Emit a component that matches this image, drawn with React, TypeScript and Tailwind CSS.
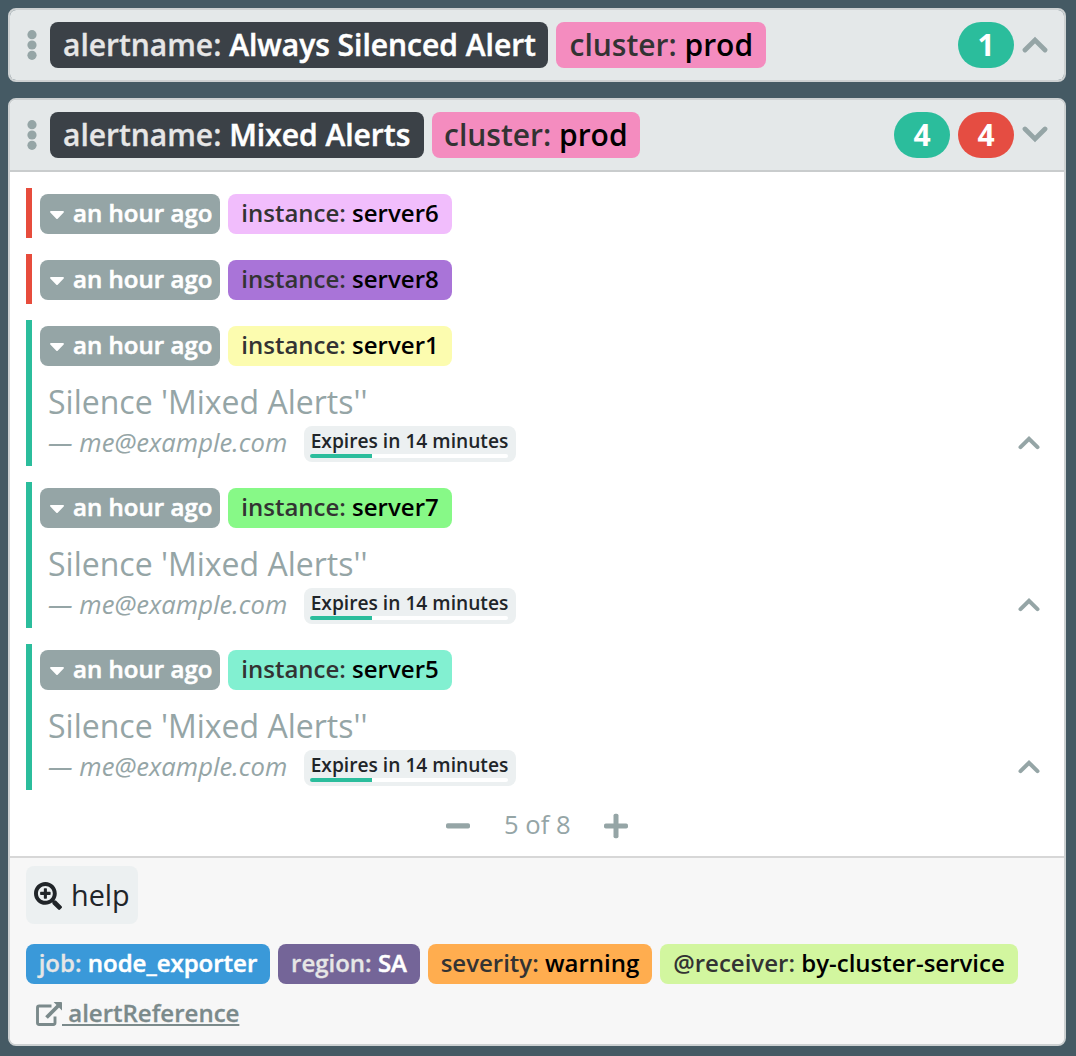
import type { ReactNode } from "react";
import { FaCaretDown, FaSearchPlus } from "react-icons/fa";

type LabelProps = { name: string; value: string; className: string; light?: boolean };

function LabelText({ name, value, light }: { name: string; value: string; light?: boolean }) {
  return (
    <>
      <span className={light ? "text-[#e6e6e6] [-webkit-text-stroke:0.3px_#e6e6e6]" : "text-[#333333]"}>{name}: </span>
      <span className={light ? "text-white [-webkit-text-stroke:0.5px_white]" : "text-black"}>{value}</span>
    </>
  );
}

function HeaderLabel({ className, ...text }: LabelProps) {
  return (
    <span
      className={`flex h-[46px] items-center rounded-lg text-[30px] leading-none font-semibold tracking-[-0.01px] whitespace-pre ${className}`}
    >
      <LabelText {...text} />
    </span>
  );
}

function Label({ className, ...text }: LabelProps) {
  return (
    <span
      className={`flex h-10 items-center justify-center rounded-lg pb-0.5 text-[24px] leading-none font-semibold whitespace-pre ${className}`}
    >
      <LabelText {...text} />
    </span>
  );
}

function Dots() {
  return (
    <svg width="10" height="30" viewBox="0 0 10 30" className="mr-[13px] ml-[17px] fill-[#95a5a6]">
      <circle cx="5" cy="4.7" r="4.6" />
      <circle cx="5" cy="15" r="4.6" />
      <circle cx="5" cy="25.3" r="4.6" />
    </svg>
  );
}

function Chevron({ down, className }: { down?: boolean; className: string }) {
  return (
    <svg
      viewBox="0 0 26 17"
      className={`shrink-0 ${className}`}
      fill="none"
      stroke="currentColor"
      strokeWidth="4.8"
      strokeLinecap="round"
      strokeLinejoin="miter"
    >
      {down ? <path d="M3 3 L13 12.9 L23 3" /> : <path d="M3 14 L13 4.1 L23 14" />}
    </svg>
  );
}

function Minus() {
  return (
    <svg width="24" height="26" viewBox="0 0 24 26" fill="currentColor">
      <rect x="0" y="10.2" width="24" height="5.4" rx="1.8" />
    </svg>
  );
}

function Plus() {
  return (
    <svg width="24" height="26" viewBox="0 0 24 26" fill="currentColor">
      <rect x="0" y="10.4" width="24" height="5.2" rx="1.8" />
      <rect x="9.5" y="0.8" width="5" height="24.4" rx="1.8" />
    </svg>
  );
}

function ExternalLink() {
  return (
    <svg width="26" height="26" viewBox="0 0 26 26" fill="none" stroke="currentColor">
      <path d="M15.5 5 H3.2 Q1.5 5 1.5 6.7 V21.8 Q1.5 23.5 3.2 23.5 H17.3 Q19 23.5 19 21.8 V15.5" strokeWidth="2.9" />
      <path d="M10.5 16.5 L22.5 4.5" strokeWidth="3.8" />
      <path d="M17.6 1 H25.2 Q26 1 26 1.8 V9.4 Z" fill="currentColor" stroke="none" />
    </svg>
  );
}

function Counter({ value, className }: { value: number; className: string }) {
  return (
    <span
      className={`flex h-[46px] w-14 items-center justify-center rounded-full text-[30px] leading-none font-bold text-white ${className}`}
    >
      {value}
    </span>
  );
}

function GroupHeader({ labels, counters, open }: { labels: ReactNode; counters: ReactNode; open?: boolean }) {
  return (
    <div className="flex h-[70px] items-center bg-[#e4e8e9]">
      <Dots />
      <div className="flex gap-2">{labels}</div>
      <div className="ml-auto flex gap-2">{counters}</div>
      <Chevron down={open} className="mr-4 mb-px ml-2 h-[17px] w-[26px] text-[#95a5a6]" />
    </div>
  );
}

function Silence() {
  return (
    <div className="flex h-[100px] flex-col pl-2 text-[#95a5a6]">
      <div className="mt-3.5 h-[46px] text-[32px] leading-[44px]">Silence 'Mixed Alerts''</div>
      <div className="flex h-9 items-center">
        <span className="w-[256px] pb-0.5 text-[25.6px] leading-none tracking-[0.05px] italic">— me@example.com</span>
        <div className="flex h-9 w-[212px] flex-col rounded-lg bg-[#ecf0f1] px-1.5">
          <span className="h-7 w-[199px] text-center text-[19.2px] leading-[30px] font-semibold whitespace-nowrap text-[#212529]">
            Expires in 14 minutes
          </span>
          <div className="flex h-1 w-[198px] overflow-hidden rounded-full bg-white">
            <div className="w-[62px] bg-[#2bbd9c]" />
          </div>
        </div>
        <Chevron className="mr-2 mb-[3px] ml-auto h-[15px] w-[22px]" />
      </div>
    </div>
  );
}

function Alert({ server, color, silenced }: { server: string; color: string; silenced?: boolean }) {
  return (
    <div className={`border-l-[6px] pl-2 ${silenced ? "h-[146px] border-[#2bbd9c]" : "h-[50px] border-[#e74c3c]"}`}>
      <div className="flex gap-2 pt-1.5">
        <span className="flex h-10 w-[180px] items-center rounded-lg bg-[#95a5a6] pl-[9px] text-[24px] leading-none font-semibold whitespace-nowrap text-white">
          <FaCaretDown size={24} className="mr-2 w-4" />
          <span className="pb-0.5 tracking-[0.04px] [-webkit-text-stroke:0.6px_white]">an hour ago</span>
        </span>
        <Label name="instance" value={server} className={`w-[224px] ${color}`} />
      </div>
      {silenced && <Silence />}
    </div>
  );
}

const alerts = [
  { server: "server6", color: "bg-[#f1bdfc]", silenced: false },
  { server: "server8", color: "bg-[#a974d8]", silenced: false },
  { server: "server1", color: "bg-[#fcfcaf]", silenced: true },
  { server: "server7", color: "bg-[#87f987]", silenced: true },
  { server: "server5", color: "bg-[#82f0d1]", silenced: true },
];

export default function App() {
  return (
    <div className="flex h-[1056px] w-[1076px] flex-col gap-4 bg-[#455a64] py-2 pr-2.5 pl-2 font-['Open_Sans',sans-serif]">
      <section className="overflow-hidden rounded-lg border-2 border-[#cdd1d2]">
        <GroupHeader
          labels={
            <>
              <HeaderLabel name="alertname" value="Always Silenced Alert" light className="w-[498px] bg-[#3b4147] pl-[13px]" />
              <HeaderLabel name="cluster" value="prod" className="w-[210px] bg-[#f48cbf] pl-[13.5px]" />
            </>
          }
          counters={<Counter value={1} className="bg-[#2bbd9c]" />}
        />
      </section>

      <section className="overflow-hidden rounded-lg border-2 border-[#cdd1d2] bg-white">
        <GroupHeader
          open
          labels={
            <>
              <HeaderLabel name="alertname" value="Mixed Alerts" light className="w-[374px] bg-[#3b4147] pl-[13px]" />
              <HeaderLabel name="cluster" value="prod" className="w-[208px] bg-[#f48cbf] pl-3" />
            </>
          }
          counters={
            <>
              <Counter value={4} className="bg-[#2bbd9c]" />
              <Counter value={4} className="bg-[#e54d42]" />
            </>
          }
        />
        <div className="flex h-[688px] flex-col gap-4 border-y-2 border-t-[#c9cccd] border-b-[#d7d7d7] px-4 pt-4">
          {alerts.map((a) => (
            <Alert key={a.server} {...a} />
          ))}
          <div className="flex h-10 items-center pl-[420px] text-[#95a5a6]">
            <Minus />
            <span className="mx-[34px] w-[66px] pb-0.5 text-center text-[25.6px] leading-none whitespace-nowrap">
              5 of 8
            </span>
            <Plus />
          </div>
        </div>
        <footer className="h-[186px] bg-[#f7f7f7] px-4 pt-2">
          <div className="flex h-[58px] w-[112px] items-center rounded-lg bg-[#ecf0f1] pl-2 text-[28.8px] leading-none text-[#212529]">
            <FaSearchPlus size={28} className="mt-px mr-[9px]" />
            help
          </div>
          <div className="mt-5 flex gap-2">
            <Label name="job" value="node_exporter" light className="w-[244px] bg-[#3a99d9]" />
            <Label name="region" value="SA" light className="w-[142px] bg-[#746598]" />
            <Label name="severity" value="warning" className="w-[224px] bg-[#ffad4f]" />
            <Label name="@receiver" value="by-cluster-service" className="w-[358px] bg-[#d2f69f]" />
          </div>
          <a className="mt-2.5 flex h-10 items-center pl-2.5 text-[24px] leading-none font-semibold text-[#7b8a8b]">
            <ExternalLink />
            <span className="pb-0.5 whitespace-pre underline [-webkit-text-stroke:0.3px_#7b8a8b]"> alertReference</span>
          </a>
        </footer>
      </section>
    </div>
  );
}
